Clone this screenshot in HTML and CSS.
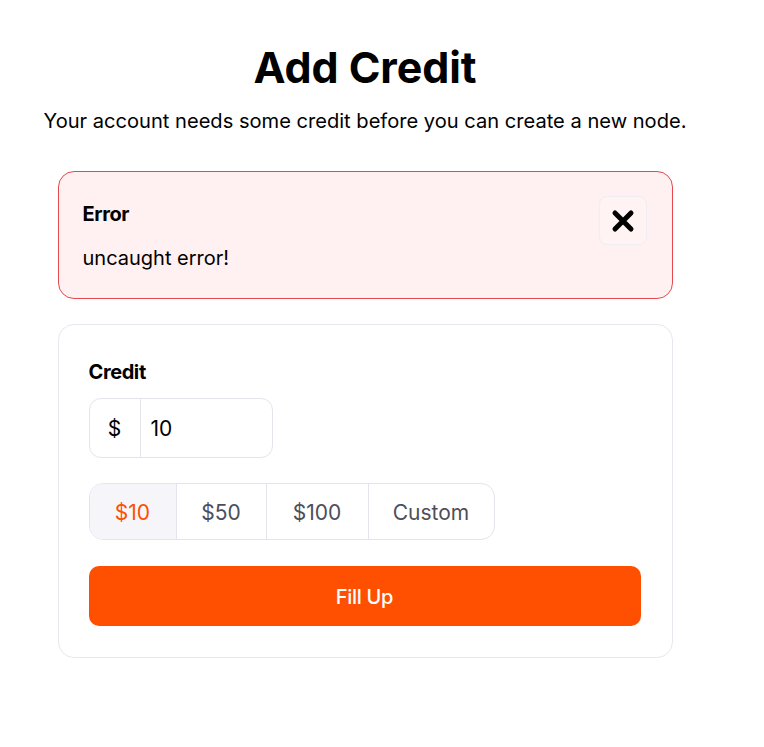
FILE: index.html
```html
<!DOCTYPE html>
<html>
<head>
<meta charset="utf-8">
<link rel="stylesheet" href="styles.css">
</head>
<body>
<main class="page">
  <h1 class="title">Add Credit</h1>
  <p class="subtitle">Your account needs some credit before you can create a new node.</p>
  <section class="alert">
    <div class="alert-body">
      <div class="alert-title">Error</div>
      <div class="alert-text">uncaught error!</div>
    </div>
    <button class="close" aria-label="Close">
      <svg width="26" height="26" viewBox="0 0 26 26"><path d="M5 5 L21 21 M21 5 L5 21" stroke="#000" stroke-width="5" stroke-linecap="round" fill="none"/></svg>
    </button>
  </section>
  <section class="card">
    <div class="label">Credit</div>
    <div class="input-group">
      <span class="prefix">$</span>
      <span class="value">10</span>
    </div>
    <div class="segments">
      <span class="seg seg-10 active">$10</span>
      <span class="seg seg-50">$50</span>
      <span class="seg seg-100">$100</span>
      <span class="seg seg-custom">Custom</span>
    </div>
    <button class="fill">Fill Up</button>
  </section>
</main>
</body>
</html>
```
FILE: styles.css
```css
* { box-sizing: border-box; }
body {
  margin: 0;
  background: #fff;
  font-family: Inter, "Liberation Sans", Arial, sans-serif;
  color: #000;
}
.page {
  width: 730px;
  display: flex;
  flex-direction: column;
  align-items: center;
  padding-top: 41px;
}
.title {
  margin: 0;
  font-size: 43px;
  font-weight: 700;
  letter-spacing: -0.1px;
  line-height: 52px;
}
.subtitle {
  margin: 14px 0 0;
  font-size: 20.1px;
  line-height: 28px;
  letter-spacing: 0;
}
.alert {
  margin-top: 36px;
  width: 615px;
  height: 128px;
  border: 1px solid #e5484d;
  background: #fff0f1;
  border-radius: 16px;
  display: flex;
  justify-content: space-between;
  align-items: flex-start;
  padding: 24px 25px 0 24px;
}
.alert-title {
  font-size: 20px;
  font-weight: 700;
  line-height: 28px;
  margin-top: 4px;
  letter-spacing: -0.4px;
}
.alert-text {
  font-size: 20px;
  line-height: 28px;
  margin-top: 16px;
  letter-spacing: 0;
}
.close {
  width: 48px;
  height: 49px;
  border: 1px solid #efeef4;
  border-radius: 8px;
  background: #fff3f4;
  display: flex;
  align-items: center;
  justify-content: center;
  padding: 0;
}
.card {
  margin-top: 25px;
  width: 615px;
  border: 1px solid #e7e7ef;
  border-radius: 16px;
  padding: 31px 31px 31px 30px;
  display: flex;
  flex-direction: column;
}
.label {
  font-size: 20px;
  font-weight: 700;
  line-height: 28px;
  margin-top: 2px;
  letter-spacing: -0.4px;
}
.input-group {
  margin-top: 12px;
  width: 184px;
  height: 60px;
  border: 1px solid #e4e4ec;
  border-radius: 12px;
  display: flex;
  align-items: stretch;
  font-size: 21px;
}
.prefix {
  width: 51px;
  border-right: 1px solid #e4e4ec;
  display: flex;
  align-items: center;
  justify-content: center;
}
.value {
  display: flex;
  align-items: center;
  padding-left: 10px;
}
.segments {
  margin-top: 25px;
  display: flex;
  width: 406px;
  height: 57px;
  border: 1px solid #e4e4ec;
  border-radius: 14px;
  overflow: hidden;
}
.seg {
  display: flex;
  align-items: center;
  justify-content: center;
  font-size: 21px;
  color: #4e4e5a;
  border-right: 1px solid #e4e4ec;
  padding-top: 2px;
}
.seg:last-child { border-right: 0; }
.seg-10 { width: 87px; }
.seg-50 { width: 90px; }
.seg-100 { width: 102px; }
.seg-custom { flex: 1; }
.seg.active {
  background: #f6f6fa;
  color: #ff4f00;
}
.fill {
  margin-top: 26px;
  width: 552px;
  height: 60px;
  border: 0;
  border-radius: 10px;
  background: #ff4f00;
  color: #fff;
  font-family: inherit;
  font-size: 20px;
  font-weight: 500;
  letter-spacing: -0.3px;
  padding-top: 2px;
}
```
